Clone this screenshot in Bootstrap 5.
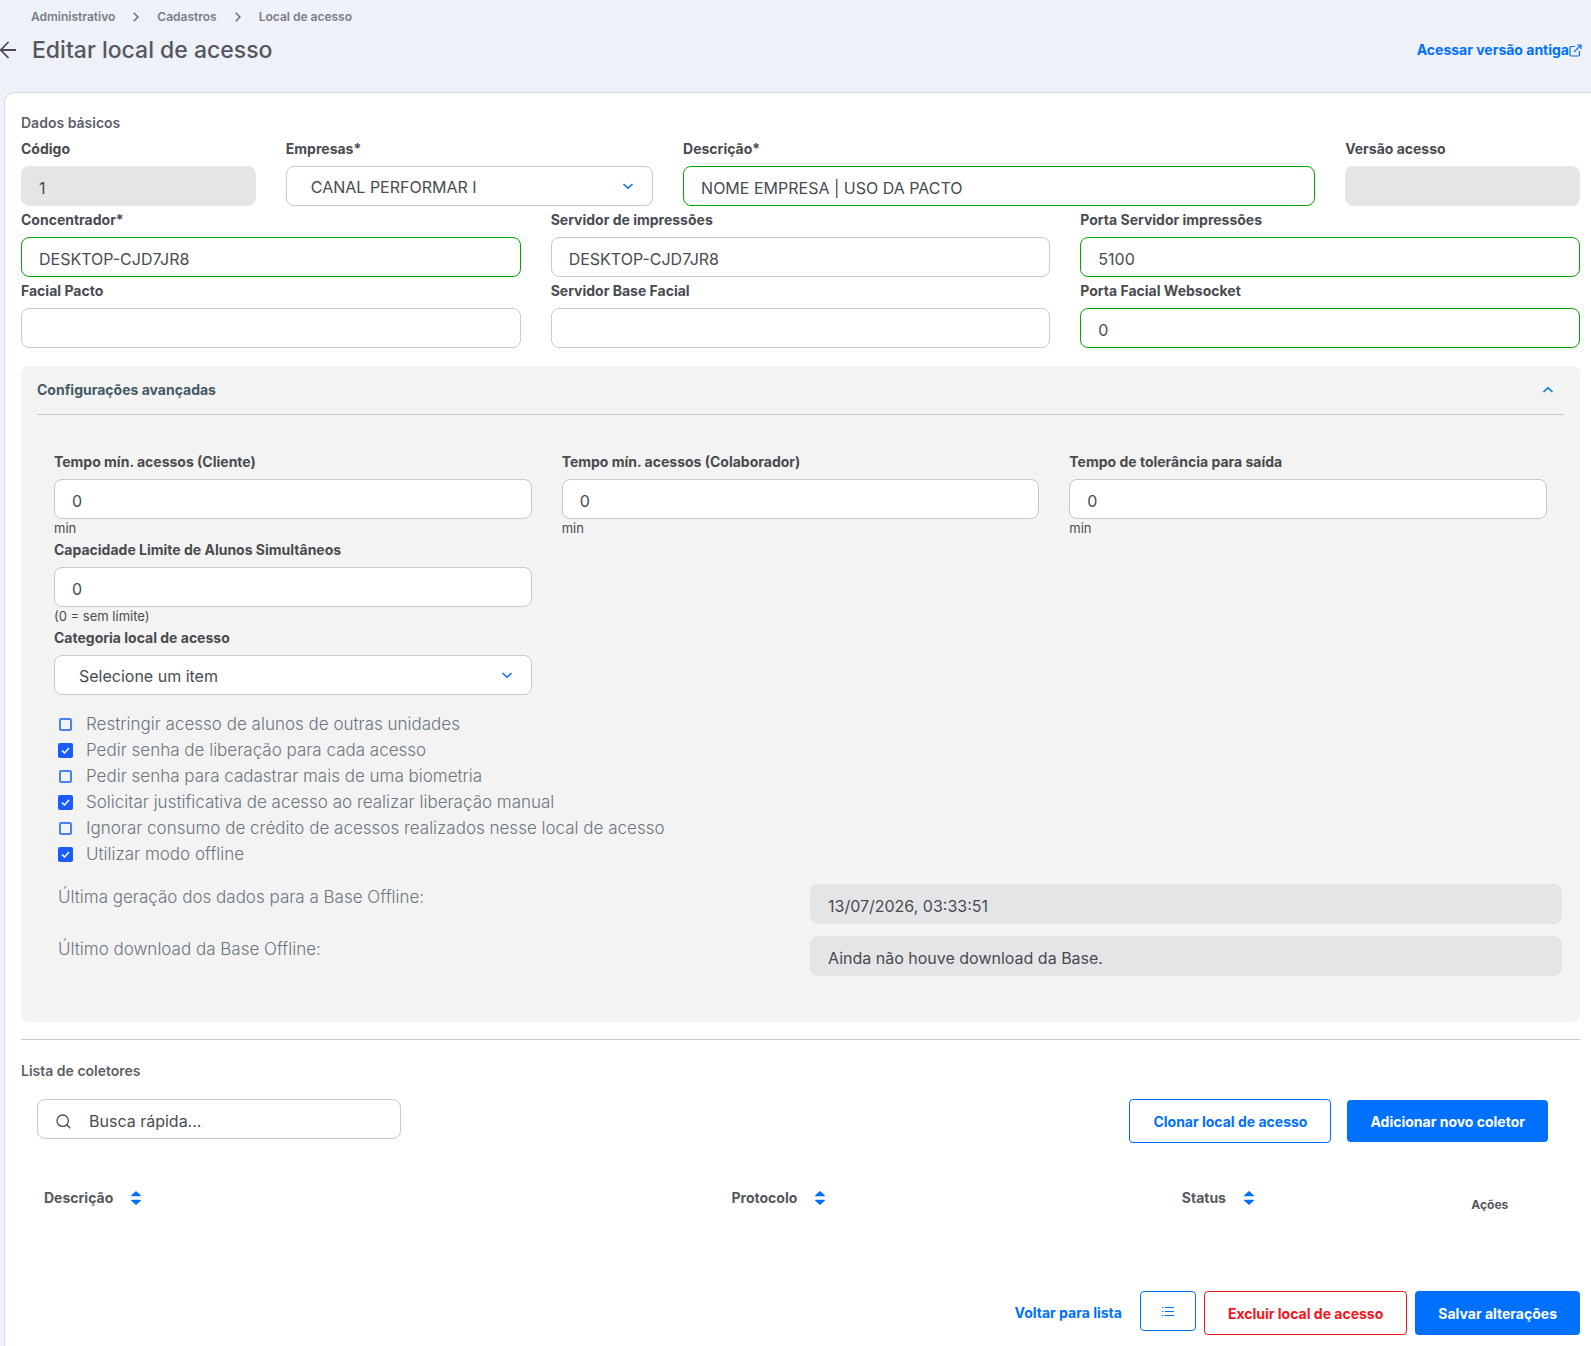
<!DOCTYPE html>
<html lang="pt-BR">
<head>
<meta charset="utf-8">
<meta name="viewport" content="width=device-width, initial-scale=1">
<title>Editar local de acesso</title>
<link href="https://cdn.jsdelivr.net/npm/bootstrap@5.3.0/dist/css/bootstrap.min.css" rel="stylesheet">
<style>
body { font-family: Inter, "Open Sans", sans-serif; font-size: 14px; line-height: 20px; color: #494b50; background: #eef1f7; overflow-x: hidden; }
a { text-decoration: none; color: #0070ff; }
.crumbs { padding: 7px 0 0 31px; gap: 18px; font-size: 12px; font-weight: 600; }
.crumbs a, .crumbs span { color: #797d86; }
.title-bar { padding-right: 9px; height: 46px; }
.page-title { font-size: 23px; line-height: 32px; font-weight: 500; color: #55585e; margin: 0 0 0 15px; }
.back-link { line-height: 0; }
.old-version { font-weight: 700; }
.sheet { margin: 19px 0 0 4px; padding: 20px 11px 11px 16px; background: #fff; border: 1px solid #d7dae0; border-right: 0; border-radius: 10px 0 0 0; }
.section-title { font-size: 14px; line-height: 20px; font-weight: 600; color: #5c5f66; margin: 0 0 2px; }
.row:not(.g-0) { --bs-gutter-x: 30px; }
.field { padding-top: 4px; }
.field-label { display: block; font-weight: 700; line-height: 20px; margin-bottom: 7px; }
.field .form-control, .field .form-select, .entry { height: 40px; border: 1px solid #c7c9cc; border-radius: 8px; font-size: 16px; color: #494b50; background-color: #fff; box-shadow: none; }
.form-control.entry { padding: 4px 17px 0; }
.field .form-select { padding: 2px 40px 0 20px; text-indent: 4px; background-position: right 18px center; background-size: 12px 12px;
  background-image: url("data:image/svg+xml,%3Csvg xmlns='http://www.w3.org/2000/svg' viewBox='0 0 12 12' fill='none' stroke='%230070ff' stroke-width='1.5'%3E%3Cpath d='M1.5 4L6 8.300L10.500 4'/%3E%3C/svg%3E"); }
.form-control.checked-ok { border-color: #00a800; }
.form-control.entry:disabled { background: #e4e5e7; border-color: #e4e5e7; opacity: 1; }
.hint { display: block; font-size: 13px; line-height: 16px; padding-top: 1px; }
.panel { margin-top: 18px; padding: 0 16px 34px; background: #f3f3f3; border-radius: 8px; }
.panel-toggle { width: 100%; height: 49px; padding: 0 10px 0 0; background: none; border: 0; border-bottom: 1px solid #c7c9cc; color: #455a64; font-weight: 700; }
.panel-fields { padding: 33px 17px 0; }
.option-list { padding: 16px 0 0 21px; }
.option-item { height: 26px; gap: 13px; color: #6b7680; font-size: 17px; font-weight: 300; }
.option-item .form-check-input { width: 13px; height: 13px; margin: 0 1px; border: 2px solid #4a80f5; border-radius: 2px; background-color: #f3f3f3; flex: none; }
.option-item .form-check-input:checked { width: 15px; height: 15px; margin: 0; border: 0; background-color: #1a5cff; background-size: 15px;
  background-image: url("data:image/svg+xml,%3Csvg xmlns='http://www.w3.org/2000/svg' viewBox='0 0 15 15' fill='none' stroke='%23fff' stroke-width='1.500'%3E%3Cpath d='M4 7.500L6.500 10L11 5'/%3E%3C/svg%3E"); }
.offline { padding: 17px 2px 0 21px; }
.offline .row { min-height: 52px; }
.offline label { padding-top: 3px; color: #6b7680; font-size: 17px; font-weight: 300; }
.rule { margin: 17px 0 21px; border: 0; border-top: 1px solid #c7c9cc; opacity: 1; }
.tools { padding: 16px 32px 0 16px; }
.search-wrap { width: 364px; position: relative; }
.search-wrap svg { position: absolute; left: 19px; top: 15px; pointer-events: none; }
.search-wrap .entry { padding-left: 51px; }
.search-wrap .entry::placeholder { color: #494b50; opacity: 1; }
.act { height: 44px; padding: 0 23px; border-radius: 4px; font-size: 14px; font-weight: 700; white-space: nowrap; }
.act-fill { background: #0070ff; border: 0; color: #fff; }
.act-line { background: #fff; border: 1px solid #0070ff; color: #0070ff; }
.act-danger { background: #fff; border: 1px solid #f5141c; color: #f5141c; }
.act-low { height: 42px; }
.act-icon { height: 40px; width: 56px; padding: 0 21px; }
.grid-wrap { padding: 45px 32px 0 16px; }
.collectors { width: 100%; table-layout: fixed; }
.collectors th { height: 24px; padding: 0 7px; vertical-align: top; font-weight: 700; color: #55585e; }
.collectors .last-col { vertical-align: bottom; text-align: center; font-size: 12px; line-height: 14px; }
.sorter { background: none; border: 0; padding: 0 0 3px; margin-left: 18px; line-height: 0; vertical-align: middle; }
.w-desc { width: 45.5%; } .w-proto { width: 29.8%; } .w-status { width: 17%; }
.footer-bar { margin-top: 79px; gap: 8px; }
.footer-bar .back-list { padding: 12px 10px 0 0; font-weight: 700; }
</style>
<script src="https://cdn.jsdelivr.net/npm/bootstrap@5.3.0/dist/js/bootstrap.bundle.min.js"></script>
</head>
<body>
<header>
  <nav class="crumbs d-flex align-items-center" aria-label="Trilha">
    <a href="#">Administrativo</a>
    <svg width="6" height="10" viewBox="0 0 6 10" fill="none" stroke="#6b6e76" stroke-width="1.5"><path d="M.7.7 5 5 .7 9.300"/></svg>
    <a href="#">Cadastros</a>
    <svg width="6" height="10" viewBox="0 0 6 10" fill="none" stroke="#6b6e76" stroke-width="1.5"><path d="M.7.7 5 5 .7 9.300"/></svg>
    <span>Local de acesso</span>
  </nav>
  <div class="title-bar d-flex align-items-center">
    <a class="back-link" href="#" aria-label="Voltar"><svg width="17" height="18" viewBox="0 0 17 18" fill="none" stroke="#494b50" stroke-width="1.8"><path d="M16 9H1M8.500 1 .8 9l7.700 8"/></svg></a>
    <h1 class="page-title">Editar local de acesso</h1>
    <a class="old-version ms-auto d-flex align-items-center" href="#">Acessar versão antiga<svg width="13" height="13" viewBox="0 0 13 13" fill="none" stroke="#0070ff" stroke-width="1.200"><path d="M6 2.500H2.200Q1 2.500 1 3.700v7.100Q1 12 2.200 12h7.100q1.200 0 1.200-1.200V7M8 1h4v4M12 1 5 8"/></svg></a>
  </div>
</header>

<main class="sheet">
  <h2 class="section-title">Dados básicos</h2>
  <div>
    <div class="row">
      <div class="col-2 field"><label class="field-label" for="codigo">Código</label><input class="form-control entry" id="codigo" value="1" disabled></div>
      <div class="col-3 field"><label class="field-label" for="empresas">Empresas*</label><select class="form-select" id="empresas"><option>CANAL PERFORMAR I</option></select></div>
      <div class="col-5 field"><label class="field-label" for="descricao">Descrição*</label><input class="form-control entry checked-ok" id="descricao" value="NOME EMPRESA | USO DA PACTO"></div>
      <div class="col-2 field"><label class="field-label" for="versao">Versão acesso</label><input class="form-control entry" id="versao" disabled></div>
    </div>
    <div class="row">
      <div class="col-4 field"><label class="field-label" for="conc">Concentrador*</label><input class="form-control entry checked-ok" id="conc" value="DESKTOP-CJD7JR8"></div>
      <div class="col-4 field"><label class="field-label" for="serv">Servidor de impressões</label><input class="form-control entry" id="serv" value="DESKTOP-CJD7JR8"></div>
      <div class="col-4 field"><label class="field-label" for="porta">Porta Servidor impressões</label><input class="form-control entry checked-ok" id="porta" value="5100"></div>
    </div>
    <div class="row">
      <div class="col-4 field"><label class="field-label" for="facial">Facial Pacto</label><input class="form-control entry" id="facial"></div>
      <div class="col-4 field"><label class="field-label" for="basef">Servidor Base Facial</label><input class="form-control entry" id="basef"></div>
      <div class="col-4 field"><label class="field-label" for="socket">Porta Facial Websocket</label><input class="form-control entry checked-ok" id="socket" value="0"></div>
    </div>
  </div>

  <section class="panel">
    <button class="panel-toggle d-flex align-items-center justify-content-between" type="button" aria-expanded="true">Configurações avançadas
      <svg width="12" height="12" viewBox="0 0 12 12" fill="none" stroke="#0070ff" stroke-width="1.5"><path d="M1.500 8 6 3.700 10.500 8"/></svg></button>
    <div class="panel-fields">
      <div class="row">
        <div class="col-4 field"><label class="field-label" for="tcli">Tempo mín. acessos (Cliente)</label><input class="form-control entry" id="tcli" value="0"><span class="hint">min</span></div>
        <div class="col-4 field"><label class="field-label" for="tcol">Tempo mín. acessos (Colaborador)</label><input class="form-control entry" id="tcol" value="0"><span class="hint">min</span></div>
        <div class="col-4 field"><label class="field-label" for="ttol">Tempo de tolerância para saída</label><input class="form-control entry" id="ttol" value="0"><span class="hint">min</span></div>
      </div>
      <div class="row"><div class="col-4 field"><label class="field-label" for="cap">Capacidade Limite de Alunos Simultâneos</label><input class="form-control entry" id="cap" value="0"><span class="hint">(0 = sem limite)</span></div></div>
      <div class="row"><div class="col-4 field"><label class="field-label" for="cat">Categoria local de acesso</label><select class="form-select" id="cat"><option>Selecione um item</option></select></div></div>
    </div>
    <div class="option-list">
      <div class="option-item d-flex align-items-center"><input class="form-check-input" type="checkbox" id="o1"><label for="o1">Restringir acesso de alunos de outras unidades</label></div>
      <div class="option-item d-flex align-items-center"><input class="form-check-input" type="checkbox" id="o2" checked><label for="o2">Pedir senha de liberação para cada acesso</label></div>
      <div class="option-item d-flex align-items-center"><input class="form-check-input" type="checkbox" id="o3"><label for="o3">Pedir senha para cadastrar mais de uma biometria</label></div>
      <div class="option-item d-flex align-items-center"><input class="form-check-input" type="checkbox" id="o4" checked><label for="o4">Solicitar justificativa de acesso ao realizar liberação manual</label></div>
      <div class="option-item d-flex align-items-center"><input class="form-check-input" type="checkbox" id="o5"><label for="o5">Ignorar consumo de crédito de acessos realizados nesse local de acesso</label></div>
      <div class="option-item d-flex align-items-center"><input class="form-check-input" type="checkbox" id="o6" checked><label for="o6">Utilizar modo offline</label></div>
    </div>
    <div class="offline">
      <div class="row g-0"><label class="col-6" for="ger">Última geração dos dados para a Base Offline:</label><div class="col-6"><input class="form-control entry" id="ger" value="13/07/2026, 03:33:51" disabled></div></div>
      <div class="row g-0"><label class="col-6" for="down">Último download da Base Offline:</label><div class="col-6"><input class="form-control entry" id="down" value="Ainda não houve download da Base." disabled></div></div>
    </div>
  </section>

  <hr class="rule">
  <h2 class="section-title">Lista de coletores</h2>
  <div class="tools d-flex align-items-start">
    <div class="search-wrap me-auto">
      <svg width="15" height="15" viewBox="0 0 15 15" fill="none" stroke="#494b50" stroke-width="1.300"><circle cx="6.700" cy="6.700" r="5.700"/><path d="m10.800 10.800 3.500 3.500"/></svg>
      <input class="form-control entry" type="search" placeholder="Busca rápida..." aria-label="Busca rápida">
    </div>
    <div class="d-flex align-items-center gap-3">
      <button class="btn act act-line" type="button">Clonar local de acesso</button>
      <button class="btn act act-fill act-low" type="button">Adicionar novo coletor</button>
    </div>
  </div>
  <div class="grid-wrap">
    <table class="collectors">
      <thead><tr>
        <th class="w-desc" scope="col">Descrição<button class="sorter" type="button" aria-label="Ordenar por descrição"><svg width="10" height="14" viewBox="0 0 10 14" fill="#0070ff"><path d="M5 0l5 4.500q0 .8-.8.8H.8Q0 5.300 0 4.500zM5 14l5-4.500q0-.8-.8-.8H.8q-.8 0-.8.8z"/></svg></button></th>
        <th class="w-proto" scope="col">Protocolo<button class="sorter" type="button" aria-label="Ordenar por protocolo"><svg width="10" height="14" viewBox="0 0 10 14" fill="#0070ff"><path d="M5 0l5 4.500q0 .8-.8.8H.8Q0 5.300 0 4.500zM5 14l5-4.500q0-.8-.8-.8H.8q-.8 0-.8.8z"/></svg></button></th>
        <th class="w-status" scope="col">Status<button class="sorter" type="button" aria-label="Ordenar por status"><svg width="10" height="14" viewBox="0 0 10 14" fill="#0070ff"><path d="M5 0l5 4.500q0 .8-.8.8H.8Q0 5.300 0 4.500zM5 14l5-4.500q0-.8-.8-.8H.8q-.8 0-.8.8z"/></svg></button></th>
        <th class="last-col" scope="col">Ações</th>
      </tr></thead>
    </table>
  </div>
  <div class="footer-bar d-flex justify-content-end align-items-start">
    <a class="back-list" href="#">Voltar para lista</a>
    <button class="btn act act-line act-icon" type="button" aria-label="Histórico"><svg class="d-block" width="12" height="10" viewBox="0 0 12 10" fill="none" stroke="#0070ff" stroke-width="1"><path d="M3 1.500h9M3 5.500h9M3 9.500h9M0 1.500h1.500M0 5.500h1.500M0 9.500h1.500"/></svg></button>
    <button class="btn act act-danger" type="button">Excluir local de acesso</button>
    <button class="btn act act-fill" type="button">Salvar alterações</button>
  </div>
</main>
</body>
</html>
